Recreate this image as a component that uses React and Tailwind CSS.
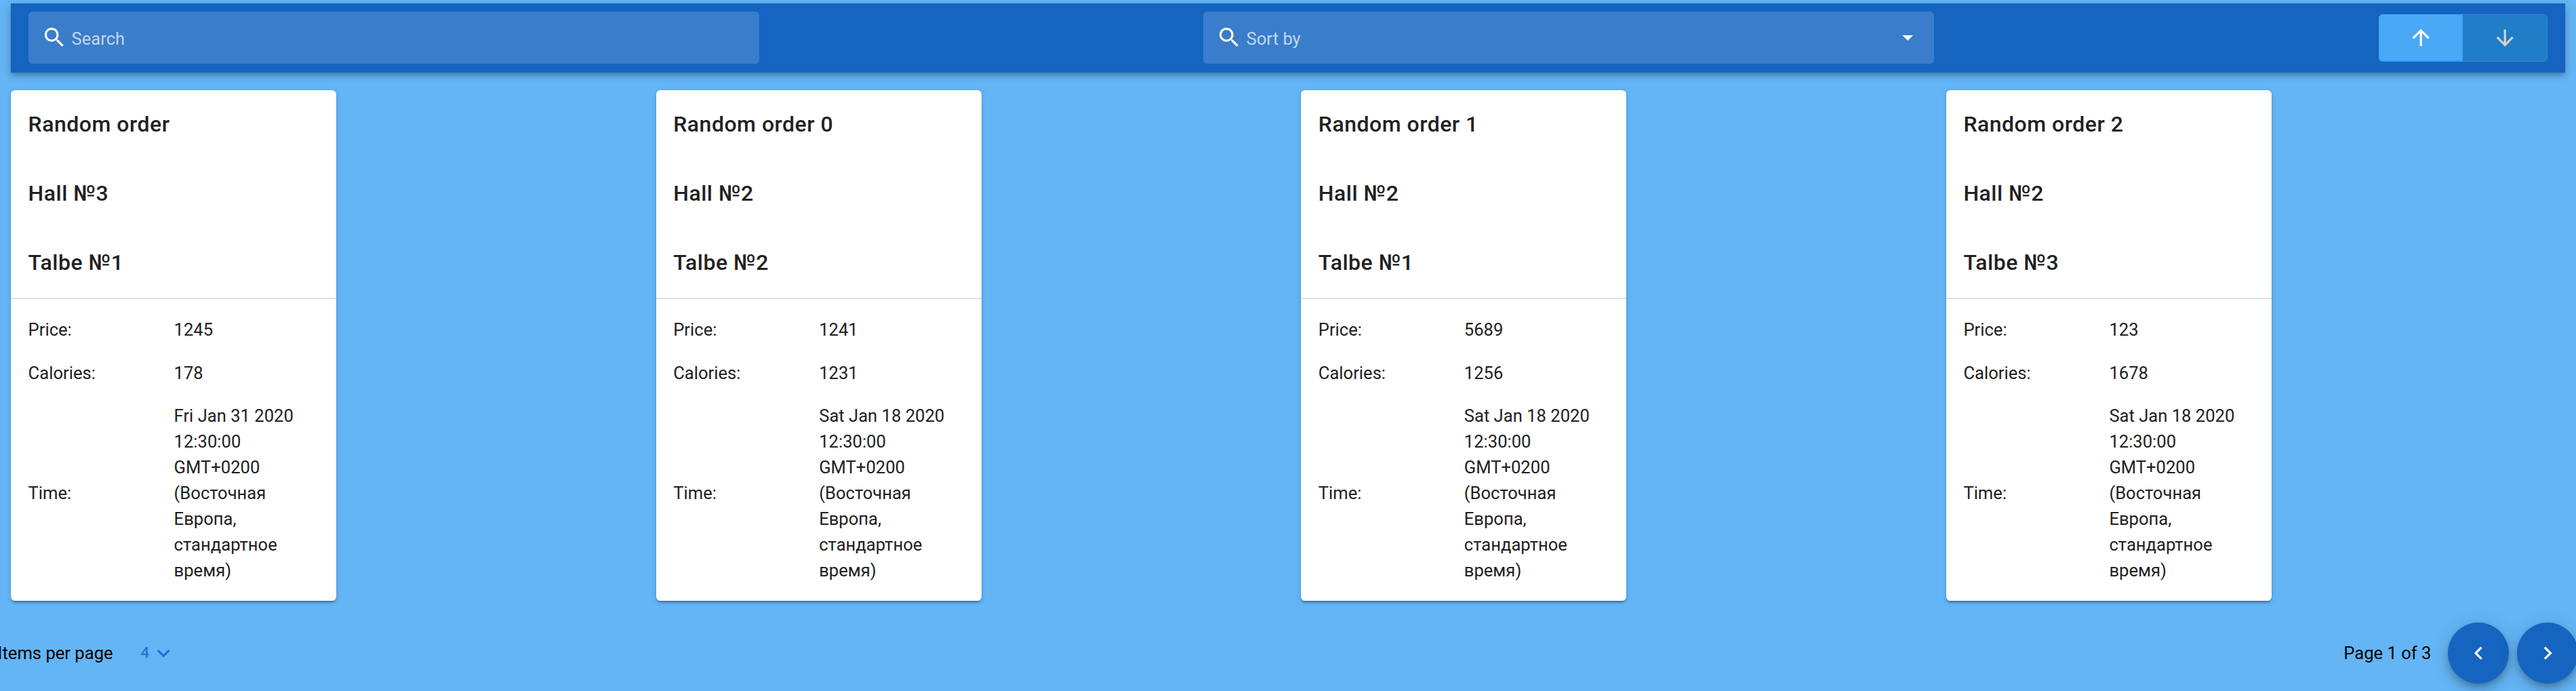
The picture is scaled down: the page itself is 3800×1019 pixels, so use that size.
const orders = [
  { name: 'Random order', hall: 3, table: 1, price: 1245, calories: 178, day: 'Fri Jan 31 2020' },
  { name: 'Random order 0', hall: 2, table: 2, price: 1241, calories: 1231, day: 'Sat Jan 18 2020' },
  { name: 'Random order 1', hall: 2, table: 1, price: 5689, calories: 1256, day: 'Sat Jan 18 2020' },
  { name: 'Random order 2', hall: 2, table: 3, price: 123, calories: 1678, day: 'Sat Jan 18 2020' },
];

function Icon({ d, className }) {
  return (
    <svg viewBox="0 0 24 24" className={className} fill="currentColor">
      <path d={d} />
    </svg>
  );
}

const magnify =
  'M9.5,3A6.5,6.5 0 0,1 16,9.5C16,11.11 15.41,12.59 14.44,13.73L14.71,14H15.5L20.5,19L19,20.5L14,15.5V14.71L13.73,14.44C12.59,15.41 11.11,16 9.5,16A6.5,6.5 0 0,1 3,9.5A6.5,6.5 0 0,1 9.5,3M9.5,5C7,5 5,7 5,9.5C5,12 7,14 9.5,14C12,14 14,12 14,9.5C14,7 12,5 9.5,5Z';
const menuDown = 'M7,10L12,15L17,10H7Z';
const arrowUp =
  'M13,20H11V8L5.5,13.5L4.08,12.08L12,4.16L19.92,12.08L18.5,13.5L13,8V20Z';
const arrowDown =
  'M11,4H13V16L18.5,10.5L19.92,11.92L12,19.84L4.08,11.92L5.5,10.5L11,16V4Z';
const chevronLeft = 'M15.41,16.58L10.83,12L15.41,7.41L14,6L8,12L14,18L15.41,16.58Z';
const chevronRight = 'M8.59,16.58L13.17,12L8.59,7.41L10,6L16,12L10,18L8.59,16.58Z';
const chevronDown = 'M7.41,8.58L12,13.17L16.59,8.58L18,10L12,16L6,10L7.41,8.58Z';

function Field({ label, className = '', children }) {
  return (
    <div className={'mt-3 flex h-[77px] w-[1078px] items-center rounded-[6.4px] bg-white/16 px-[19.2px] text-white ' + className}>
      <Icon d={magnify} className="size-[38.4px]" />
      <span className="ml-[6px] grow pt-[2px] text-[25.6px] leading-8 text-white/70">{label}</span>
      {children}
    </div>
  );
}

function Title({ children }) {
  return (
    <div className="px-[25.6px] py-[25.6px] text-[32px] leading-[51.2px] font-medium tracking-[0.5px]">{children}</div>
  );
}

function Row({ label, className, children }) {
  return (
    <div className={'flex items-center ' + className}>
      <div className="w-[215px]">{label}</div>
      <div className="flex-1">{children}</div>
    </div>
  );
}

function Card({ order }) {
  return (
    <div className="h-[753px] w-[480px] rounded-[6.4px] bg-white text-[#212121] shadow-[0_5px_2px_-3px_rgba(0,0,0,0.2),0_3px_3px_0_rgba(0,0,0,0.14),0_2px_8px_0_rgba(0,0,0,0.12)]">
      <div className="-mt-px">
        <Title>{order.name}</Title>
        <Title>Hall №{order.hall}</Title>
        <Title>Talbe №{order.table}</Title>
      </div>
      <div className="h-[2px] bg-[#e0e0e0]" />
      <div className="px-[25.6px] text-[25.6px] leading-[38px]">
        <Row label="Price:" className="mt-[13px] h-[64px]">{order.price}</Row>
        <Row label="Calories:" className="h-[64px]">{order.calories}</Row>
        <Row label="Time:" className="mt-[12px]">
          {order.day} 12:30:00 GMT+0200 (Восточная Европа, стандартное время)
        </Row>
      </div>
    </div>
  );
}

function RoundButton({ d }) {
  return (
    <button className="flex size-[89.6px] shrink-0 items-center justify-center rounded-full bg-[#1565c0] text-white shadow-[0_5px_8px_-2px_rgba(0,0,0,0.2),0_10px_16px_0_rgba(0,0,0,0.14),0_2px_29px_0_rgba(0,0,0,0.12)]">
      <Icon d={d} className="size-[38.4px]" />
    </button>
  );
}

export default function App() {
  return (
    <div className="h-[1019px] w-[3800px] overflow-hidden bg-[#64b5f6] pt-[5px] font-[Roboto,sans-serif]">
      <header className="mx-4 flex h-[102px] items-start bg-[#1565c0] px-[26px] shadow-[0_3px_6px_-2px_rgba(0,0,0,0.2),0_6px_8px_0_rgba(0,0,0,0.14),0_2px_16px_0_rgba(0,0,0,0.12)]">
        <Field label="Search" />
        <Field label="Sort by" className="ml-[655px]">
          <Icon d={menuDown} className="size-[38.4px]" />
        </Field>
        <div className="mt-4 ml-auto flex h-[70px] w-[249px] overflow-hidden rounded-[6.4px]">
          <div className="flex w-[124px] items-center justify-center border border-b-2 border-[#3fa2f3] border-b-[#2d9cf4] bg-[#49a9f7] text-white">
            <Icon d={arrowUp} className="size-[38.4px]" />
          </div>
          <div className="flex flex-1 items-center justify-center border border-l-0 border-[#3a8bcb] bg-[#207dc8] text-[#d2d2d2]">
            <Icon d={arrowDown} className="size-[38.4px]" />
          </div>
        </div>
      </header>
      <main className="mt-[26px] ml-4 grid grid-cols-[repeat(4,951.6px)]">
        {orders.map((o) => (
          <Card key={o.name} order={o} />
        ))}
      </main>
      <footer className="mt-[32px] flex h-[90px] items-center text-[25.6px] text-black">
        <span className="-ml-[3.5px]">Items per page</span>
        <button className="ml-[41px] flex items-center text-[22.4px] font-medium text-[#1976d2]">
          4
          <Icon d={chevronDown} className="ml-[1.5px] size-[38.4px]" />
        </button>
        <span className="mr-[25px] ml-auto">Page 1 of 3</span>
        <RoundButton d={chevronLeft} />
        <div className="-mr-[3px] ml-[12.4px] shrink-0">
          <RoundButton d={chevronRight} />
        </div>
      </footer>
    </div>
  );
}
